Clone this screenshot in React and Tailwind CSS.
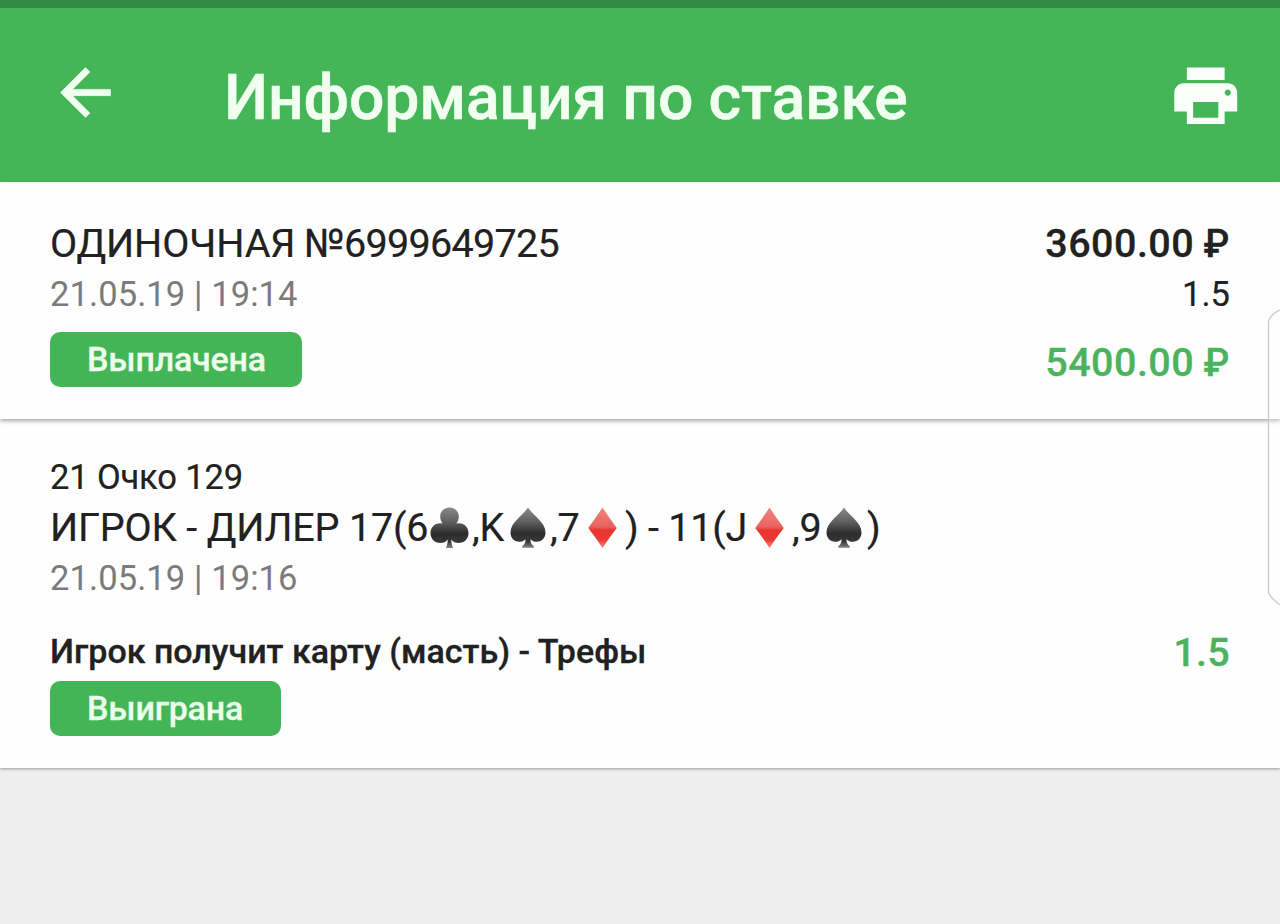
import React from "react";

function BackIcon() {
  return (
    <svg viewBox="0 0 24 24" className="h-[75px] w-[75px] fill-[#f1fff0]" aria-hidden="true">
      <path d="M20 11H7.83l5.59-5.59L12 4l-8 8 8 8 1.41-1.41L7.83 13H20v-2z" stroke="#f1fff0" strokeWidth=".2" />
    </svg>
  );
}

function PrintIcon() {
  return (
    <svg viewBox="0 0 24 24" className="h-[75.500px] w-[75.500px] fill-[#fafffa]" aria-hidden="true">
      <path d="M19 8H5c-1.66 0-3 1.34-3 3v6h4v4h12v-4h4v-6c0-1.66-1.34-3-3-3zm-3 11H8v-5h8v5zm3-7c-.55 0-1-.45-1-1s.45-1 1-1 1 .45 1 1-.45 1-1 1zm-1-9H6v4h12V3z" />
    </svg>
  );
}

function Defs() {
  return (
    <svg className="absolute h-0 w-0" aria-hidden="true">
      <defs>
        <linearGradient id="dark" x1="0" y1="0" x2="0" y2="1">
          <stop offset="0" stopColor="#8a8a8a" />
          <stop offset=".35" stopColor="#606060" />
          <stop offset=".65" stopColor="#2c2c2c" />
          <stop offset=".85" stopColor="#383838" />
          <stop offset="1" stopColor="#858585" />
        </linearGradient>
        <linearGradient id="red" x1="0" y1="0" x2="0" y2="1">
          <stop offset="0" stopColor="#ee8580" />
          <stop offset=".48" stopColor="#ea625d" />
          <stop offset=".56" stopColor="#ea332e" />
          <stop offset=".8" stopColor="#e83b34" />
          <stop offset="1" stopColor="#ef8a84" />
        </linearGradient>
      </defs>
    </svg>
  );
}

function Club() {
  return (
    <svg viewBox="0 0 39 42" className="h-[42px] w-[39px] shrink-0" aria-label="♣">
      <path
        fill="url(#dark)"
        d="M19.5 0.5C25 .5 28.8 4.4 28.8 9.4c0 3-1 5.200-2.600 7.200C33 15 38.500 19.500 38.500 26c0 6-4.200 10-9.700 10-3.300 0-6-1.300-7.600-3.600.2 3.800.7 6.200 2 8.600h-7.400c1.300-2.400 1.800-4.800 2-8.600C16.200 34.700 13.500 36 10.200 36 4.700 36 .5 32 .5 26c0-6.500 5.500-11 12.300-9.400-1.600-2-2.600-4.200-2.600-7.200C10.200 4.400 14 .5 19.500.5z"
      />
    </svg>
  );
}

function Spade() {
  return (
    <svg viewBox="0 0 36 42" className="h-[42px] w-[36px] shrink-0" aria-label="♠">
      <path
        fill="url(#dark)"
        d="M18 0.500C22.500 8 35.500 15 35.500 25.500c0 5.500-3.700 9.300-8.500 9.300-2.800 0-5-.9-6.600-2.600.2 3.600 1 5.400 3.400 7v1.600H12.200v-1.600c2.400-1.600 3.200-3.400 3.400-7C14 33.900 11.800 34.800 9 34.800 4.200 34.800.5 31 .5 25.500.5 15 13.500 8 18 .5z"
      />
    </svg>
  );
}

function Diamond() {
  return (
    <svg viewBox="0 0 29 42" className="h-[42px] w-[29px] shrink-0" aria-label="♦">
      <path fill="url(#red)" d="M14.500 0.500Q21.500 11.200 28.800 21 21.500 30.300 14.500 41 7.500 30.300.2 21 7.500 11.200 14.500.5z" />
    </svg>
  );
}

function Badge({ children, className }) {
  return (
    <div
      className={`flex h-[55px] items-center rounded-[10px] bg-[#44b556] pl-[37px] text-[34px] leading-[55px] font-medium tracking-[-0.200px] text-[#ecffec] [-webkit-text-stroke:0.300px] ${className}`}
    >
      {children}
    </div>
  );
}

function Amount({ value, className }) {
  return (
    <div className={`h-[50px] text-[39.500px] leading-[50px] font-medium tracking-[0.450px] [-webkit-text-stroke:0.300px] ${className}`}>
      {value} <span className="-ml-[2px] inline-block origin-right scale-x-95">₽</span>
    </div>
  );
}

export default function App() {
  return (
    <div className="relative flex h-[924px] w-[1280px] flex-col overflow-hidden bg-[#eeeeee] font-[Roboto,sans-serif] whitespace-pre text-[#212121]">
      <Defs />
      <div className="h-2 shrink-0 bg-[#328b42]" />
      <header className="flex h-[174px] shrink-0 items-start bg-[#45b658] pt-[47px] pl-12">
        <BackIcon />
        <h1 className="mt-[2px] ml-[101px] w-[944px] text-[62.500px] leading-[82px] font-medium tracking-[-0.150px] text-[#f1fff0] [-webkit-text-stroke:0.500px]">
          Информация по ставке
        </h1>
        <div className="mt-[3px]">
          <PrintIcon />
        </div>
      </header>

      <section className="z-10 flex h-[237px] shrink-0 justify-between bg-[#fefefe] px-[50px] pt-[37px] shadow-[0_2px_4px_rgba(0,0,0,0.35)]">
        <div>
          <div className="flex h-[50px] text-[39.500px] leading-[50px] [-webkit-text-stroke:0.200px]">
            <span className="w-[254px] tracking-[-0.100px]">ОДИНОЧНАЯ</span>
            <span className="tracking-[-0.700px]">№6999649725</span>
          </div>
          <div className="h-[48px] pt-px text-[34.500px] leading-[48px] tracking-[0.100px] text-[#7b7b7b]">21.05.19 | 19:14</div>
          <Badge className="mt-[15px] w-[252px]">Выплачена</Badge>
        </div>
        <div className="text-right">
          <Amount value="3600.00" />
          <div className="h-[48px] pt-px text-[34.500px] leading-[48px] [-webkit-text-stroke:0.200px]">1.5</div>
          <Amount value="5400.00" className="mt-[21px] text-[#4bb35d]" />
        </div>
      </section>

      <section className="h-[349px] shrink-0 bg-[#fefefe] px-[50px] pt-[34px] shadow-[0_1px_3px_rgba(0,0,0,0.35)]">
        <div className="h-[49px] text-[34.500px] leading-[48px] tracking-[-0.150px] [-webkit-text-stroke:0.200px]">21 Очко 129</div>
        <div className="flex h-[52px] items-center text-[39.500px] leading-[52px] tracking-[-0.180px] [-webkit-text-stroke:0.200px]">
          <span className="w-[380px]">ИГРОК - ДИЛЕР 17(6</span>
          <Club />
          <span className="w-[41px] pl-[3px]">,K</span>
          <Spade />
          <span className="w-[42px] pl-[4px]">,7</span>
          <Diamond />
          <span className="w-[138px] pl-[8px] tracking-[-0.250px]">) - 11(J</span>
          <Diamond />
          <span className="w-[42px] pl-[8px]">,9</span>
          <Spade />
          <span className="pl-[5px]">)</span>
        </div>
        <div className="h-[48px] text-[34.500px] leading-[48px] tracking-[0.100px] text-[#7b7b7b]">21.05.19 | 19:16</div>
        <div className="mt-[23px] flex h-[52px] justify-between">
          <span className="text-[34px] leading-[52px] font-medium [-webkit-text-stroke:0.300px]">Игрок получит карту (масть) - Трефы</span>
          <span className="pt-[2px] text-[39.500px] leading-[52px] font-medium tracking-[0.300px] text-[#4bb35d] [-webkit-text-stroke:0.300px]">1.5</span>
        </div>
        <Badge className="mt-[4px] w-[231px]">Выиграна</Badge>
      </section>

      <svg
        className="absolute top-[306px] left-[1266px] z-20 h-[302px] w-[14px]"
        viewBox="0 0 14 302"
        fill="none"
        stroke="#cacaca"
        strokeWidth="1.300"
        aria-hidden="true"
      >
        <path d="M14 4Q5 8 2.500 15V287Q5 292 14 299" fill="#ffffff" fillOpacity=".25" />
      </svg>
    </div>
  );
}
